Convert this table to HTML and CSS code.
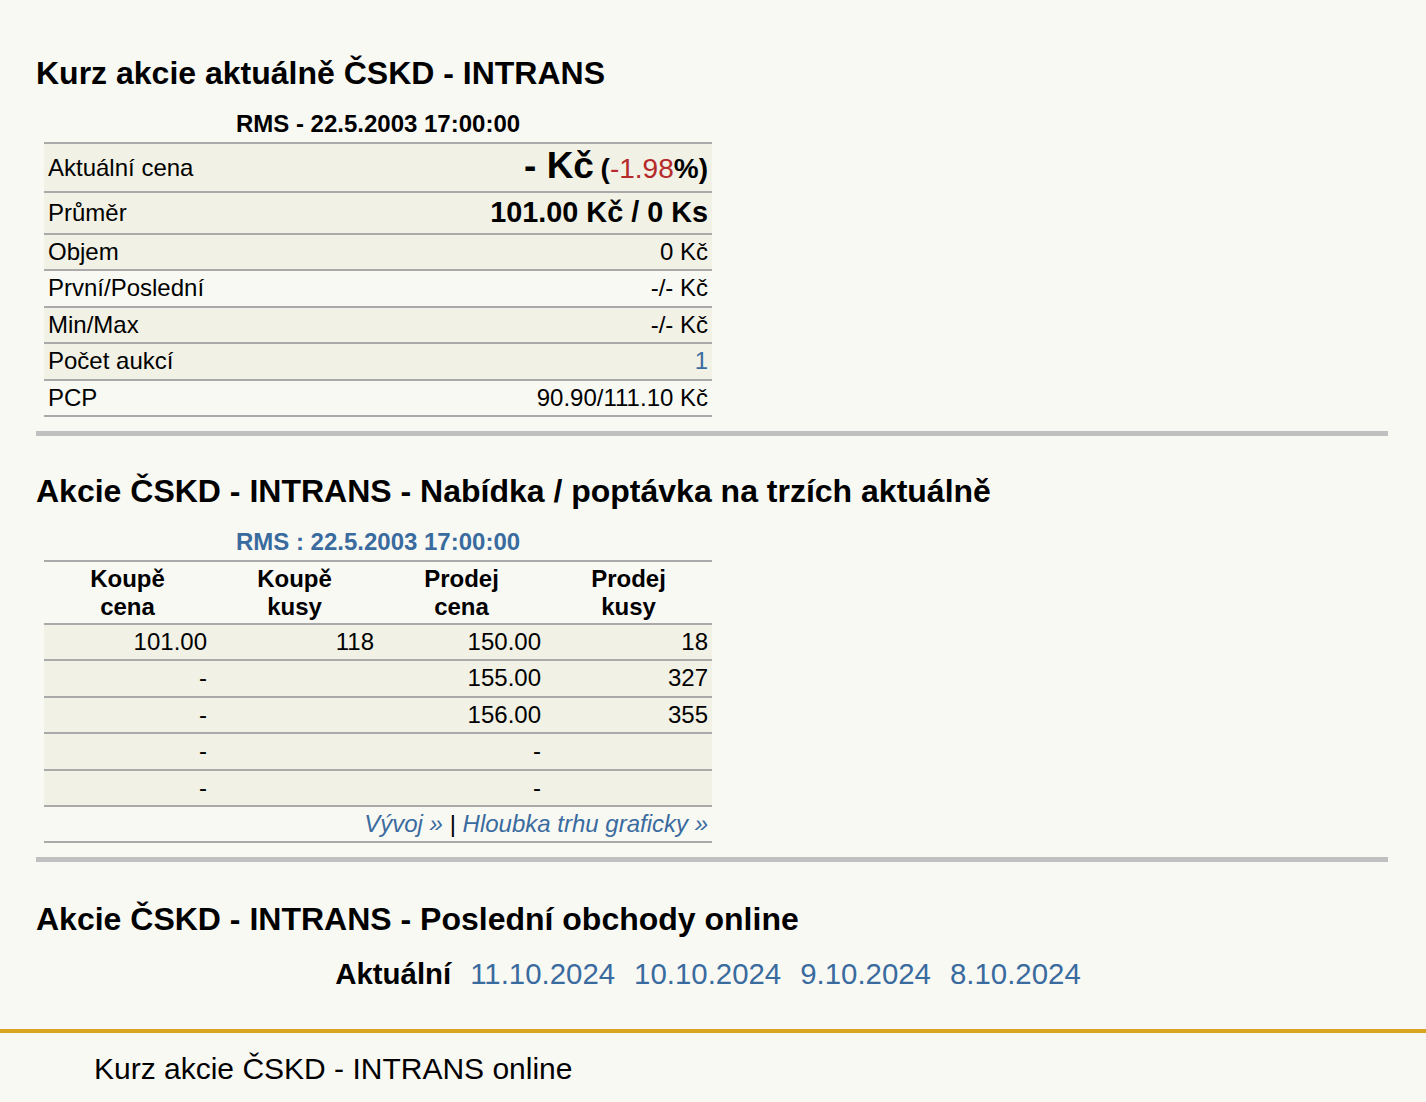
FILE: index.html
```html
<!DOCTYPE html>
<html lang="cs">
<head>
<meta charset="utf-8">
<title>Kurz akcie ČSKD - INTRANS</title>
<link rel="stylesheet" href="styles.css">
</head>
<body>
<main class="page">
  <h1 class="title first">Kurz akcie aktuálně ČSKD - INTRANS</h1>
  <table class="grid quote">
    <caption class="cap">RMS - 22.5.2003 17:00:00</caption>
    <tbody>
      <tr class="dark big">
        <td class="lbl">Aktuální cena</td>
        <td class="val"><span class="price">- Kč</span> <span class="chg">(<span class="neg">-1.98</span>%)</span></td>
      </tr>
      <tr class="dark avg">
        <td class="lbl">Průměr</td>
        <td class="val"><b>101.00 Kč / 0 Ks</b></td>
      </tr>
      <tr class="dark">
        <td class="lbl">Objem</td>
        <td class="val">0 Kč</td>
      </tr>
      <tr>
        <td class="lbl">První/Poslední</td>
        <td class="val">-/- Kč</td>
      </tr>
      <tr class="dark">
        <td class="lbl">Min/Max</td>
        <td class="val">-/- Kč</td>
      </tr>
      <tr class="dark">
        <td class="lbl">Počet aukcí</td>
        <td class="val"><a class="link" href="#">1</a></td>
      </tr>
      <tr>
        <td class="lbl">PCP</td>
        <td class="val">90.90/111.10 Kč</td>
      </tr>
    </tbody>
  </table>
  <div class="rule"></div>

  <h2 class="title sec">Akcie ČSKD - INTRANS - Nabídka / poptávka na trzích aktuálně</h2>
  <table class="grid book">
    <caption class="cap blue">RMS : 22.5.2003 17:00:00</caption>
    <thead>
      <tr>
        <th>Koupě<br>cena</th>
        <th>Koupě<br>kusy</th>
        <th>Prodej<br>cena</th>
        <th>Prodej<br>kusy</th>
      </tr>
    </thead>
    <tbody>
      <tr class="dark"><td>101.00</td><td>118</td><td>150.00</td><td>18</td></tr>
      <tr class="dark"><td>-</td><td></td><td>155.00</td><td>327</td></tr>
      <tr class="dark"><td>-</td><td></td><td>156.00</td><td>355</td></tr>
      <tr class="dark"><td>-</td><td></td><td>-</td><td></td></tr>
      <tr class="dark"><td>-</td><td></td><td>-</td><td></td></tr>
      <tr>
        <td colspan="4" class="more"><a class="link" href="#">Vývoj »</a> | <a class="link" href="#">Hloubka trhu graficky »</a></td>
      </tr>
    </tbody>
  </table>
  <div class="rule"></div>

  <h2 class="title sec last">Akcie ČSKD - INTRANS - Poslední obchody online</h2>
  <nav class="days">
    <span class="day current">Aktuální</span>
    <a class="day link" href="#">11.10.2024</a>
    <a class="day link" href="#">10.10.2024</a>
    <a class="day link" href="#">9.10.2024</a>
    <a class="day link" href="#">8.10.2024</a>
  </nav>
</main>
<footer class="foot">
  <p class="foot-text">Kurz akcie ČSKD - INTRANS online</p>
</footer>
</body>
</html>
```

FILE: styles.css
```css
html, body {
  margin: 0;
  padding: 0;
  background: #f9f9f4;
}

body {
  font-family: "Liberation Sans", Arial, sans-serif;
  color: #000;
}

.page {
  padding: 0 38px 0 36px;
}

.title {
  margin: 0;
  font-size: 32px;
  line-height: 37px;
  font-weight: bold;
}

.first {
  padding-top: 55px;
}

.sec {
  margin-top: 37px;
}

.last {
  margin-top: 39px;
}

.grid {
  width: 668px;
  margin: 18px 0 0 8px;
  border-collapse: collapse;
  font-size: 24px;
}

.cap {
  font-weight: bold;
  font-size: 24px;
  line-height: 28px;
  padding-bottom: 4px;
  text-align: center;
}

.blue {
  color: #3a6b9f;
}

.grid td,
.grid th {
  padding: 3px 4px;
  line-height: 28.4px;
  border-bottom: 2px solid #aaaaaa;
}

.grid tbody tr:first-child td,
.grid thead tr th {
  border-top: 2px solid #aaaaaa;
}

.book tbody tr:first-child td {
  border-top: 0;
}

.dark td {
  background: #f1f1e5;
}

.lbl {
  text-align: left;
}

.val {
  text-align: right;
}

.big td {
  line-height: 37px;
}

.avg td {
  line-height: 32px;
}

.price {
  font-size: 37px;
  font-weight: bold;
}

.chg {
  font-size: 28px;
  font-weight: bold;
}

.neg {
  color: #b52a2a;
  font-weight: normal;
}

.avg b {
  font-size: 28.8px;
}

.link {
  color: #3a6b9f;
  text-decoration: none;
}

.book th {
  width: 25%;
  font-weight: bold;
  text-align: center;
  line-height: 27.5px;
  vertical-align: top;
}

.book td {
  text-align: right;
}

.more .link {
  font-style: italic;
}

.rule {
  height: 5px;
  margin-top: 14px;
  background: #c0c0c0;
}

.days {
  display: flex;
  justify-content: center;
  align-items: baseline;
  gap: 19px;
  margin-top: 19px;
  padding-right: 8px;
  font-size: 29.4px;
  line-height: 34px;
}

.current {
  font-weight: bold;
}

.foot {
  margin-top: 38px;
  border-top: 4px solid #daa520;
}

.foot-text {
  margin: 0;
  padding: 19px 0 0 94px;
  font-size: 30px;
  line-height: 34px;
  height: 50px;
}
```
